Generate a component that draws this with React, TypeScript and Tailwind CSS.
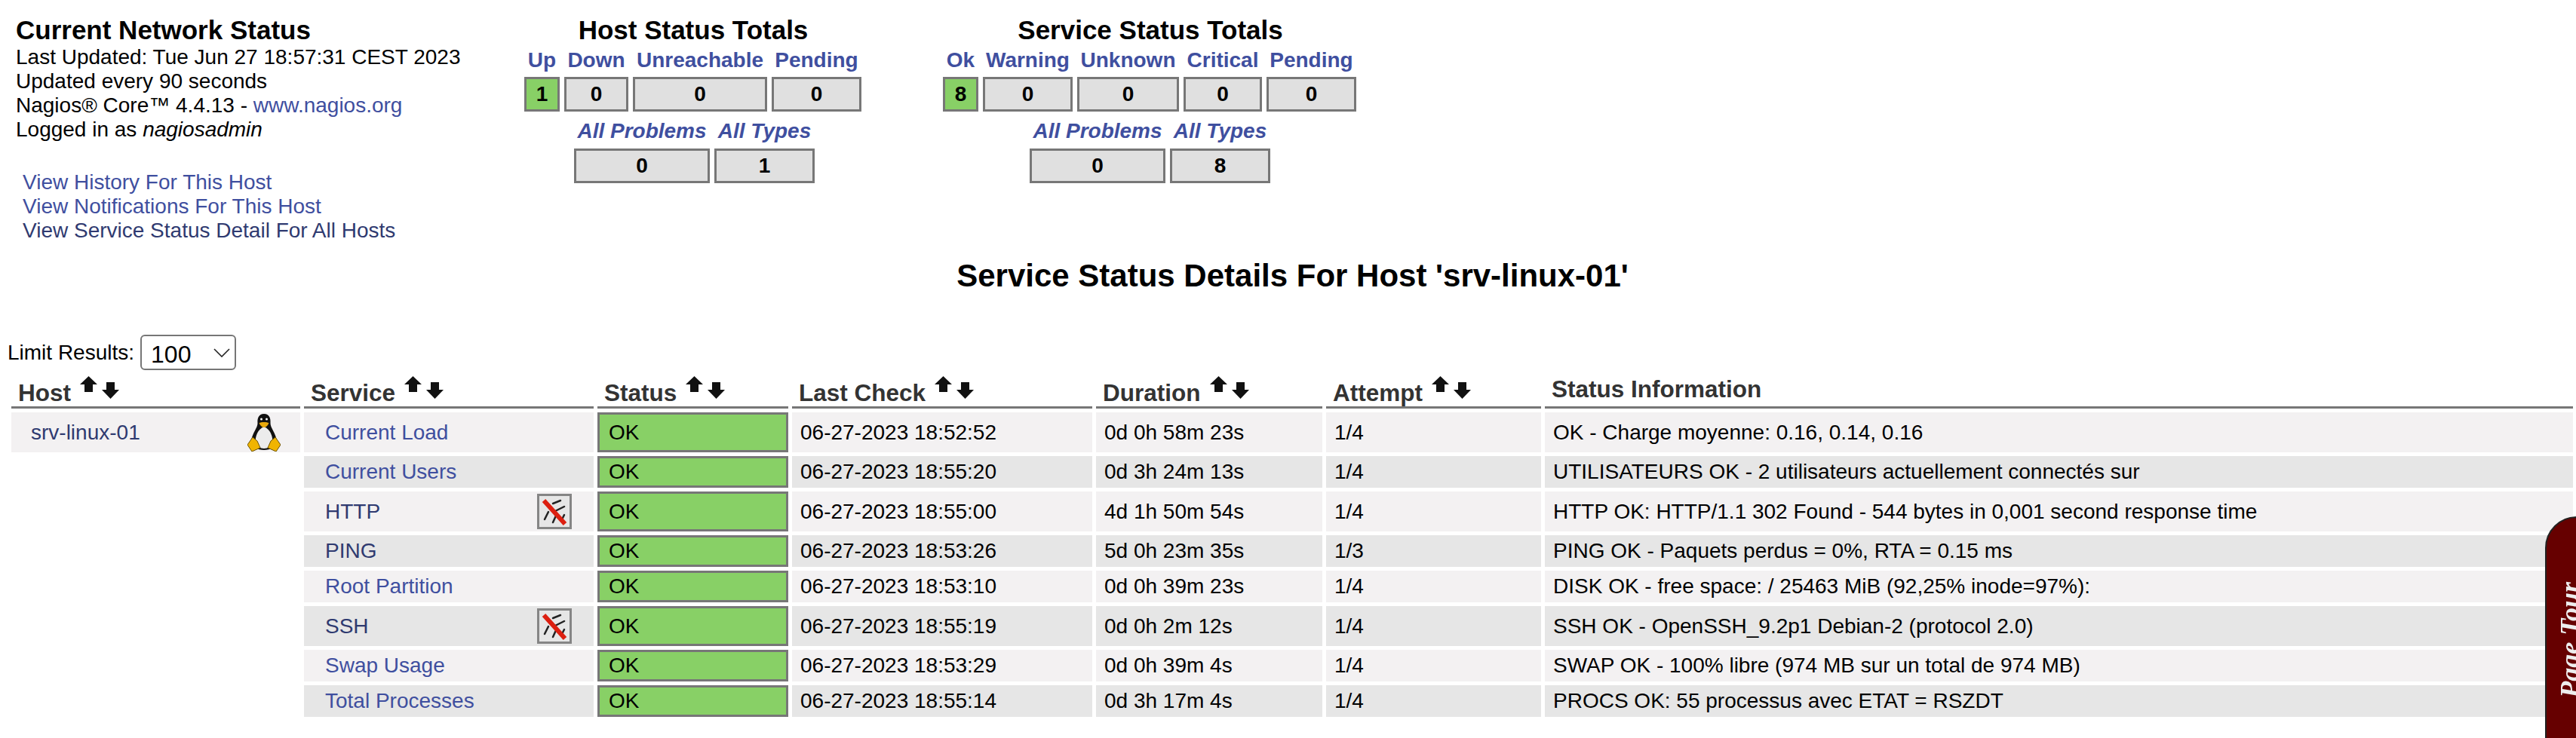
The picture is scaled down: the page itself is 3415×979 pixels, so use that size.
import type { ReactNode } from "react";

type ServiceRow = {
  name: string;
  linked: boolean;
  passive?: boolean;
  lastCheck: string;
  duration: string;
  attempt: string;
  info: string;
};

const rows: ServiceRow[] = [
  { name: "Current Load", linked: true, lastCheck: "06-27-2023 18:52:52", duration: "0d 0h 58m 23s", attempt: "1/4", info: "OK - Charge moyenne: 0.16, 0.14, 0.16" },
  { name: "Current Users", linked: true, lastCheck: "06-27-2023 18:55:20", duration: "0d 3h 24m 13s", attempt: "1/4", info: "UTILISATEURS OK - 2 utilisateurs actuellement connectés sur" },
  { name: "HTTP", linked: false, passive: true, lastCheck: "06-27-2023 18:55:00", duration: "4d 1h 50m 54s", attempt: "1/4", info: "HTTP OK: HTTP/1.1 302 Found - 544 bytes in 0,001 second response time" },
  { name: "PING", linked: false, lastCheck: "06-27-2023 18:53:26", duration: "5d 0h 23m 35s", attempt: "1/3", info: "PING OK - Paquets perdus = 0%, RTA = 0.15 ms" },
  { name: "Root Partition", linked: true, lastCheck: "06-27-2023 18:53:10", duration: "0d 0h 39m 23s", attempt: "1/4", info: "DISK OK - free space: / 25463 MiB (92,25% inode=97%):" },
  { name: "SSH", linked: false, passive: true, lastCheck: "06-27-2023 18:55:19", duration: "0d 0h 2m 12s", attempt: "1/4", info: "SSH OK - OpenSSH_9.2p1 Debian-2 (protocol 2.0)" },
  { name: "Swap Usage", linked: true, lastCheck: "06-27-2023 18:53:29", duration: "0d 0h 39m 4s", attempt: "1/4", info: "SWAP OK - 100% libre (974 MB sur un total de 974 MB)" },
  { name: "Total Processes", linked: true, lastCheck: "06-27-2023 18:55:14", duration: "0d 3h 17m 4s", attempt: "1/4", info: "PROCS OK: 55 processus avec ETAT = RSZDT" },
];

function SortArrows() {
  return (
    <svg width="52" height="30" viewBox="0 0 52 30" className="ml-[12px] inline-block align-[3px] blur-[0.5px]" fill="#111">
      <path d="M11.5 0 L23 11 L17 11 L17 21 L6 21 L6 11 L0 11 Z" />
      <path d="M35 8 L46 8 L46 18 L52 18 L40.5 30 L29 18 L35 18 Z" />
    </svg>
  );
}

function Tux() {
  return (
    <svg width="44" height="50" viewBox="0 0 44 50" className="blur-[0.4px]">
      <path d="M22 0 C15 0 13 6 13.5 12 C14 18 6 26 5 36 C4 44 14 48 22 48 C30 48 40 44 39 36 C38 26 30 18 30.5 12 C31 6 29 0 22 0 Z" fill="#111" />
      <path d="M22 17 C14 20 10 30 11 37 C12 43 17 46 22 46 C27 46 32 43 33 37 C34 30 30 20 22 17 Z" fill="#ececec" />
      <path d="M15.5 12 C18 10.5 26 10.5 28.5 12 C27 16 24 18 22 18 C20 18 17 16 15.5 12 Z" fill="#e8a90c" />
      <circle cx="18.5" cy="7" r="1.5" fill="#fff" />
      <circle cx="25.5" cy="7" r="1.5" fill="#fff" />
      <path d="M0 41 L7 31 L13 36 L17 45 L6 50 Z" fill="#f0b400" stroke="#6b5200" />
      <path d="M44 41 L37 31 L31 36 L27 45 L38 50 Z" fill="#f0b400" stroke="#6b5200" />
    </svg>
  );
}

function PassiveIcon() {
  return (
    <svg width="46" height="47" viewBox="0 0 46 47" className="blur-[0.5px]">
      <rect x="1.5" y="1.5" width="43" height="44" fill="#e6e6e6" stroke="#858585" strokeWidth="3" />
      <g stroke="#222" strokeWidth="2.5" strokeLinecap="round">
        <path d="M21 13 L31 9" />
        <path d="M24 23 L36 17" />
        <path d="M10 34 L15 24" />
        <path d="M21 38 L26 27" />
        <path d="M32 36 L36 28" />
      </g>
      <path d="M9 9 L37 40" stroke="#dc1f10" strokeWidth="6" />
    </svg>
  );
}

function Total({ label, value, width, green }: { label: string; value: number; width: string; green?: boolean }) {
  return (
    <div className={`flex flex-col items-center ${width}`}>
      <a className="mb-[6px] whitespace-nowrap text-[28px] leading-[32px] font-bold text-[#3f4f9f]">{label}</a>
      <div className={`flex h-[46px] w-full items-center justify-center border-[3px] border-[#777] text-[28px] font-bold ${green ? "bg-[#88d066]" : "bg-[#e0e0e0]"}`}>
        {value}
      </div>
    </div>
  );
}

function TotalsTitle({ children }: { children: ReactNode }) {
  return <div className="mb-[4px] text-center text-[35px] leading-[40px] font-bold text-black">{children}</div>;
}

function AllTotal({ label, value, width }: { label: string; value: number; width: string }) {
  return (
    <div className={`flex flex-col items-center ${width}`}>
      <a className="mb-[7px] whitespace-nowrap text-[28px] leading-[32px] font-bold italic text-[#3f4f9f]">{label}</a>
      <div className="flex h-[46px] w-full items-center justify-center border-[3px] border-[#777] bg-[#e0e0e0] text-[28px] font-bold">
        {value}
      </div>
    </div>
  );
}

function Th({ label, sort = true }: { label: string; sort?: boolean }) {
  return (
    <th className={`border-b-[3px] border-[#777] pr-0 pl-[9px] text-left align-bottom text-[31.5px] leading-[36px] font-bold whitespace-nowrap text-[#333] ${sort ? "pb-0" : "pb-[5px]"}`}>
      {label}
      {sort && <SortArrows />}
    </th>
  );
}

export default function App() {
  return (
    <div className="relative h-[979px] w-[3415px] overflow-hidden bg-white font-['Liberation_Sans',Arial,sans-serif] text-black">
      <div className="flex h-[342px] items-start pt-[20px]">
        <div className="ml-[21px] w-[674px] text-[28px] leading-[32px]">
          <div className="text-[35px] leading-[40px] font-bold">Current Network Status</div>
          <div>Last Updated: Tue Jun 27 18:57:31 CEST 2023</div>
          <div>Updated every 90 seconds</div>
          <div>
            Nagios® Core™ 4.4.13 - <a className="text-[#3f4f9f]">www.nagios.org</a>
          </div>
          <div>
            Logged in as <i>nagiosadmin</i>
          </div>
          <div className="mt-[38px] ml-[9px]">
            <div className="text-[#3f4f9f]">View History For This Host</div>
            <div className="text-[#3f4f9f]">View Notifications For This Host</div>
            <div className="text-[#2f3a70]">View Service Status Detail For All Hosts</div>
          </div>
        </div>

        <div className="w-[448px]">
          <TotalsTitle>Host Status Totals</TotalsTitle>
          <div className="flex gap-[6px]">
            <Total label="Up" value={1} width="w-[47px]" green />
            <Total label="Down" value={0} width="w-[85px]" />
            <Total label="Unreachable" value={0} width="w-[178px]" />
            <Total label="Pending" value={0} width="w-[119px]" />
          </div>
          <div className="mt-[10px] ml-[66px] flex gap-[6px]">
            <AllTotal label="All Problems" value={0} width="w-[180px]" />
            <AllTotal label="All Types" value={1} width="w-[133px]" />
          </div>
        </div>

        <div className="ml-[107px] w-[550px]">
          <TotalsTitle>Service Status Totals</TotalsTitle>
          <div className="flex gap-[6px]">
            <Total label="Ok" value={8} width="w-[47px]" green />
            <Total label="Warning" value={0} width="w-[119px]" />
            <Total label="Unknown" value={0} width="w-[135px]" />
            <Total label="Critical" value={0} width="w-[104px]" />
            <Total label="Pending" value={0} width="w-[119px]" />
          </div>
          <div className="mt-[10px] ml-[115px] flex gap-[6px]">
            <AllTotal label="All Problems" value={0} width="w-[180px]" />
            <AllTotal label="All Types" value={8} width="w-[133px]" />
          </div>
        </div>
      </div>

      <div className="pl-[12px] text-center text-[42px] leading-[48px] font-bold">Service Status Details For Host 'srv-linux-01'</div>

      <div className="mt-[54px] flex h-[47px] items-center pl-[10px] text-[28px]">
        Limit Results:
        <div className="relative ml-[8px]">
          <select className="block h-[47px] w-[127px] appearance-none rounded-[6px] border-2 border-[#767676] bg-white pl-[12px] text-[32px] text-black">
            <option>100</option>
          </select>
          <svg width="22" height="12" viewBox="0 0 22 12" className="pointer-events-none absolute top-[18px] right-[8px]" fill="none" stroke="#222" strokeWidth="1.6">
            <path d="M1 1 L11 11 L21 1" />
          </svg>
        </div>
      </div>

      <table className="ml-[10px] w-[3406px] table-fixed border-separate border-spacing-[5px] text-[28px] leading-[32px]">
        <colgroup>
          <col className="w-[383px]" />
          <col className="w-[384px]" />
          <col className="w-[253px]" />
          <col className="w-[398px]" />
          <col className="w-[300px]" />
          <col className="w-[285px]" />
          <col />
        </colgroup>
        <thead>
          <tr className="h-[46px]">
            <Th label="Host" />
            <Th label="Service" />
            <Th label="Status" />
            <Th label="Last Check" />
            <Th label="Duration" />
            <Th label="Attempt" />
            <Th label="Status Information" sort={false} />
          </tr>
        </thead>
        <tbody>
          {rows.map((row, i) => {
            const bg = i % 2 === 0 ? "bg-[#f3f1f2]" : "bg-[#e6e6e6]";
            const h = row.passive || i === 0 ? "h-[53px]" : "h-[42px]";
            return (
              <tr key={row.name} className={h}>
                {i === 0 ? (
                  <td className="bg-[#f3f1f2] p-0 align-middle">
                    <div className="flex items-center justify-between pr-[26px] pl-[26px] text-[#2f3a70]">
                      <span>srv-linux-01</span>
                      <Tux />
                    </div>
                  </td>
                ) : (
                  <td className="p-0" />
                )}
                <td className={`p-0 align-middle ${bg}`}>
                  <div className="flex items-center justify-between pr-[29px] pl-[28px]">
                    <span className={row.linked ? "text-[#3f4f9f]" : "text-[#2f3a70]"}>{row.name}</span>
                    {row.passive && <PassiveIcon />}
                  </div>
                </td>
                <td className="border-[3px] border-[#777] bg-[#88d066] py-0 pl-[12px] align-middle">OK</td>
                <td className={`py-0 pl-[11px] align-middle ${bg}`}>{row.lastCheck}</td>
                <td className={`py-0 pl-[11px] align-middle ${bg}`}>{row.duration}</td>
                <td className={`py-0 pl-[11px] align-middle ${bg}`}>{row.attempt}</td>
                <td className={`py-0 pl-[11px] align-middle ${bg}`}>{row.info}</td>
              </tr>
            );
          })}
        </tbody>
      </table>

      {/* page tour tab sticks out of the right edge */}
      <div className="absolute top-[685px] left-[3374px] h-[400px] w-[90px] rounded-tl-[42px] border-2 border-[#222] bg-[#660000]">
        <div className="absolute top-[85px] left-[11px] rotate-180 font-['Liberation_Serif',serif] text-[36px] leading-[40px] font-bold whitespace-nowrap text-[#eee] italic [writing-mode:vertical-rl]">
          Page Tour
        </div>
      </div>
    </div>
  );
}
